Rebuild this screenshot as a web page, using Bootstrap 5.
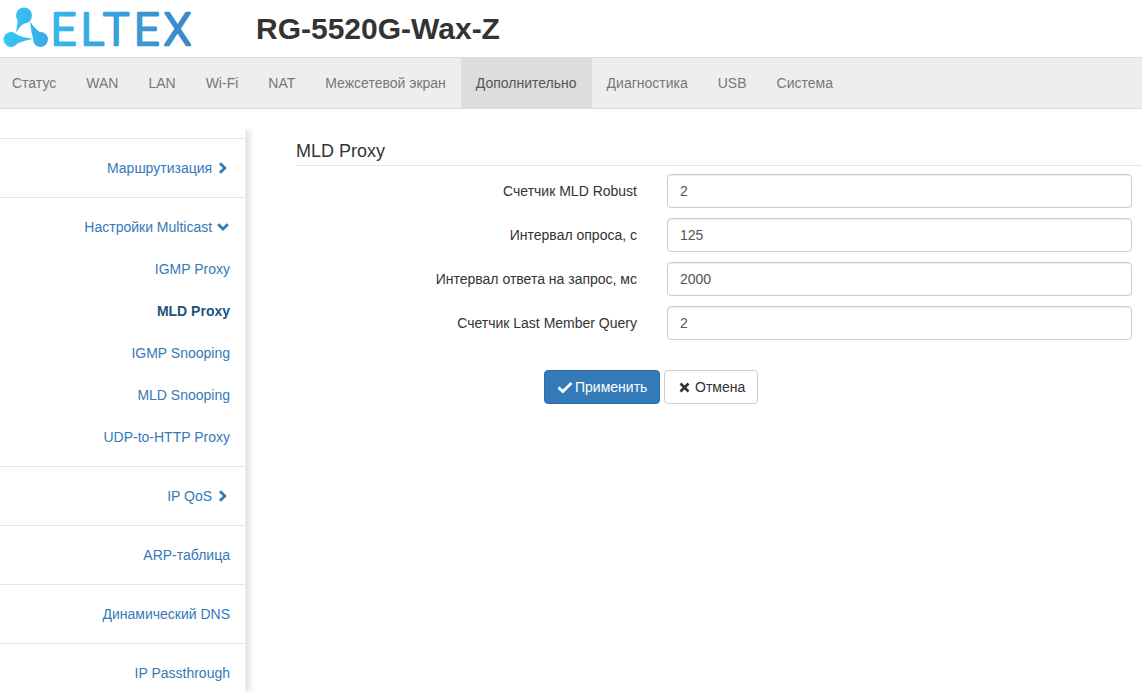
<!DOCTYPE html>
<html lang="ru">
<head>
<meta charset="utf-8">
<title>RG-5520G-Wax-Z</title>
<link href="https://cdn.jsdelivr.net/npm/bootstrap@5.3.0/dist/css/bootstrap.min.css" rel="stylesheet">
<style>
html, body { height: 696px; overflow: hidden; }
body { font-family: "Liberation Sans", Arial, sans-serif; font-size: 14px; line-height: 20px; color: #333; background: #fff; }
.top-head { height: 57px; padding-left: 4px; }
.logo-svg { width: 190px; height: 50px; flex: none; overflow: visible; }
.logo-word { font-family: "Roboto", "Liberation Sans", sans-serif; font-size: 44px; font-weight: 300; }
.model-name { font-size: 30px; line-height: 33px; font-weight: 700; margin: 0 0 0 62px; color: #333; }
.main-menu { height: 52px; background: #eee; border-top: 1px solid #ddd; border-bottom: 1px solid #ddd; padding-left: 0; margin: 0; list-style: none; }
.main-menu .nav-link { color: #777; height: 50px; padding: 15px; line-height: 20px; font-size: 14px; }
.main-menu .first-tab { padding-left: 12px; }
.main-menu .nav-link.active-tab { background: #ddd; color: #555; }
.page-body { height: 588px; }
.side-menu { width: 246px; flex: none; margin-top: 20px; padding-top: 9px; background: #fff; border-right: 1px solid #eee; box-shadow: 4px 0 7px rgba(0,0,0,.12); height: 563px; clip-path: inset(0 -14px 0 0); }
.side-group { border-top: 1px solid #e5e5e5; text-align: right; padding: 8px 0 8px; }
.side-group a { display: block; padding: 11px 15px; height: 42px; line-height: 20px; color: #337ab7; text-decoration: none; }
.side-group a.sel { color: #23527c; font-weight: 700; }
.side-group svg { width: 14px; height: 14px; vertical-align: -2px; }
.content-pane { flex: 1; min-width: 0; padding: 30px 0 0 50px; }
.pane-title { font-size: 18px; line-height: 20px; font-weight: 400; margin: 2px 0 8px; padding-bottom: 4px; border-bottom: 1px solid #e5e5e5; color: #333; height: 25px; }
.form-line { display: flex; align-items: center; margin-bottom: 10px; padding-right: 10px; }
.form-line label { width: 341px; text-align: right; margin: 0 30px 0 0; flex: none; color: #333; }
.form-line .form-control { height: 34px; padding: 6px 12px; font-size: 14px; line-height: 20px; color: #555; border-color: #ccc; border-radius: 4px; box-shadow: inset 0 1px 1px rgba(0,0,0,.075); }
.btn-line { margin-top: 30px; padding-left: 248px; gap: 4px; }
.btn-line .btn { height: 34px; padding: 6px 12px; font-size: 14px; line-height: 20px; border-radius: 4px; display: flex; align-items: center; }
.btn-apply { background: #337ab7; border-color: #2e6da4; color: #fff; width: 116px; }
.btn-cancel { background: #fff; border-color: #ccc; color: #333; width: 94px; }
.btn-apply svg { width: 16px; height: 14px; margin-right: 2px; flex: none; }
.btn-cancel svg { width: 14px; height: 14px; margin-right: 4px; flex: none; }
</style>
</head>
<body>
<header class="top-head d-flex align-items-center">
  <svg class="logo-svg" viewBox="4 3.5 190 50" role="img" aria-label="ELTEX">
    <defs>
      <linearGradient id="tg" gradientUnits="userSpaceOnUse" x1="50" x2="192" y1="0" y2="0">
        <stop offset="0" stop-color="#37b8ec"/>
        <stop offset="1" stop-color="#3b86c6"/>
      </linearGradient>
      <linearGradient id="ig" gradientUnits="userSpaceOnUse" x1="3" x2="48" y1="0" y2="0">
        <stop offset="0" stop-color="#36c8f6"/>
        <stop offset="1" stop-color="#38ace4"/>
      </linearGradient>
    </defs>
    <g fill="url(#ig)">
      <circle cx="24" cy="15" r="8"/>
      <circle cx="11" cy="39" r="7.5"/>
      <circle cx="40.5" cy="39" r="7.5"/>
      <path d="M30 20 Q21 23 16 32 Q18 22 18 11 Z"/>
      <path d="M46.5 35 Q36 31 30 21 Q31 33 34.5 43 Z"/>
      <path d="M11 32 Q22 37 33 38.5 Q22 40 11 46 Z"/>
    </g>
    <text class="logo-word" x="51" y="44.5" fill="url(#tg)" stroke="url(#tg)" stroke-width="2.6" stroke-linejoin="round" stroke-linecap="round" textLength="140" lengthAdjust="spacing">ELTEX</text>
  </svg>
  <h1 class="model-name">RG-5520G-Wax-Z</h1>
</header>
<ul class="main-menu nav">
  <li class="nav-item"><a class="nav-link first-tab" href="#">Статус</a></li>
  <li class="nav-item"><a class="nav-link" href="#">WAN</a></li>
  <li class="nav-item"><a class="nav-link" href="#">LAN</a></li>
  <li class="nav-item"><a class="nav-link" href="#">Wi-Fi</a></li>
  <li class="nav-item"><a class="nav-link" href="#">NAT</a></li>
  <li class="nav-item"><a class="nav-link" href="#">Межсетевой экран</a></li>
  <li class="nav-item"><a class="nav-link active-tab" href="#">Дополнительно</a></li>
  <li class="nav-item"><a class="nav-link" href="#">Диагностика</a></li>
  <li class="nav-item"><a class="nav-link" href="#">USB</a></li>
  <li class="nav-item"><a class="nav-link" href="#">Система</a></li>
</ul>
<div class="page-body d-flex">
  <nav class="side-menu">
    <div class="side-group"><a href="#">Маршрутизация <svg viewBox="0 0 14 14"><path d="M4 2.2 8.8 7 4 11.8" fill="none" stroke="#337ab7" stroke-width="2.8"/></svg></a></div>
    <div class="side-group">
      <a href="#">Настройки Multicast <svg viewBox="0 0 14 14"><path d="M2.2 4.2 7 9 11.8 4.2" fill="none" stroke="#337ab7" stroke-width="2.8"/></svg></a>
      <a href="#">IGMP Proxy</a>
      <a href="#" class="sel">MLD Proxy</a>
      <a href="#">IGMP Snooping</a>
      <a href="#">MLD Snooping</a>
      <a href="#">UDP-to-HTTP Proxy</a>
    </div>
    <div class="side-group"><a href="#">IP QoS <svg viewBox="0 0 14 14"><path d="M4 2.2 8.8 7 4 11.8" fill="none" stroke="#337ab7" stroke-width="2.8"/></svg></a></div>
    <div class="side-group"><a href="#">ARP-таблица</a></div>
    <div class="side-group"><a href="#">Динамический DNS</a></div>
    <div class="side-group"><a href="#">IP Passthrough</a></div>
  </nav>
  <main class="content-pane">
    <h2 class="pane-title">MLD Proxy</h2>
    <form>
      <div class="form-line"><label for="f1">Счетчик MLD Robust</label><input id="f1" class="form-control" type="text" value="2"></div>
      <div class="form-line"><label for="f2">Интервал опроса, с</label><input id="f2" class="form-control" type="text" value="125"></div>
      <div class="form-line"><label for="f3">Интервал ответа на запрос, мс</label><input id="f3" class="form-control" type="text" value="2000"></div>
      <div class="form-line"><label for="f4">Счетчик Last Member Query</label><input id="f4" class="form-control" type="text" value="2"></div>
      <div class="btn-line d-flex">
        <button type="button" class="btn btn-apply"><svg viewBox="0 0 16 14"><path d="M1.5 7.5 5.8 11.5 14.5 3" fill="none" stroke="#fff" stroke-width="2.8"/></svg>Применить</button>
        <button type="button" class="btn btn-cancel"><svg viewBox="0 0 14 14"><path d="M3.5 3.5 11.5 11.5 M11.5 3.5 3.5 11.5" fill="none" stroke="#333" stroke-width="2.6"/></svg>Отмена</button>
      </div>
    </form>
  </main>
</div>
<script src="https://cdn.jsdelivr.net/npm/bootstrap@5.3.0/dist/js/bootstrap.bundle.min.js"></script>
</body>
</html>
